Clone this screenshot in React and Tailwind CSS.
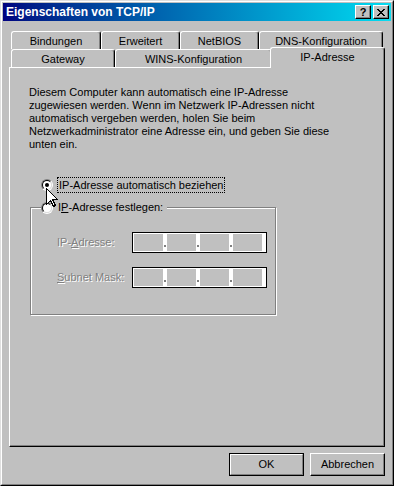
const rowOne = [
  { label: 'Bindungen', w: 'w-[90px]' },
  { label: 'Erweitert', w: 'w-[79px]' },
  { label: 'NetBIOS', w: 'w-[79px]' },
  { label: 'DNS-Konfiguration', w: 'w-[124px]' },
]

const introLines = [
  'Diesem Computer kann automatisch eine IP-Adresse',
  'zugewiesen werden. Wenn im Netzwerk IP-Adressen nicht',
  'automatisch vergeben werden, holen Sie beim',
  'Netzwerkadministrator eine Adresse ein, und geben Sie diese',
  'unten ein.',
]

function Tab({ label, w, active }) {
  if (active) {
    return (
      <div
        className={`relative z-10 -mx-[2px] -mt-[2px] h-[21px] shrink-0 rounded-t-[3px] border-l border-r border-t border-l-white border-r-black border-t-white bg-[#c0c0c0] pt-[3px] text-center shadow-[inset_-1px_0_0_#808080] ${w}`}
      >
        {label}
      </div>
    )
  }
  return (
    <div
      className={`h-[18px] shrink-0 rounded-t-[3px] border-l border-r border-t border-l-white border-r-black border-t-white pt-[3px] text-center shadow-[inset_-1px_0_0_#808080] ${w}`}
    >
      {label}
    </div>
  )
}

function Radio({ checked }) {
  return (
    <div className="h-[12px] w-[12px] shrink-0 rounded-full border border-b-white border-l-[#808080] border-r-white border-t-[#808080]">
      <div className="flex h-full w-full items-center justify-center rounded-full border border-b-[#dfdfdf] border-l-black border-r-[#dfdfdf] border-t-black bg-white">
        {checked && <div className="h-[4px] w-[4px] rounded-full bg-black" />}
      </div>
    </div>
  )
}

function IpField() {
  return (
    <div className="flex h-[21px] w-[135px] border border-black bg-white p-px">
      {[0, 1, 2, 3].map((i) => (
        <div key={i} className="flex">
          <div className="h-full w-[29px] bg-[#c0c0c0]" />
          {i < 3 && (
            <div className="flex w-[4px] flex-col justify-end pb-[4px]">
              <div className="ml-px h-[2px] w-[2px] bg-[#808080]" />
            </div>
          )}
        </div>
      ))}
    </div>
  )
}

function FieldRow({ children }) {
  return (
    <div className="flex items-center">
      <span className="w-[75px] text-[#808080] [text-shadow:1px_1px_0_#fff]">{children}</span>
      <IpField />
    </div>
  )
}

function Button({ label, primary }) {
  if (primary) {
    return (
      <div className="h-[23px] w-[75px] border border-black">
        <div className="flex h-full w-full items-center justify-center border border-b-[#808080] border-l-white border-r-[#808080] border-t-white">
          {label}
        </div>
      </div>
    )
  }
  return (
    <div className="h-[23px] w-[75px]">
      <div className="flex h-full w-full items-center justify-center border border-b-black border-l-white border-r-black border-t-white shadow-[inset_-1px_-1px_0_#808080]">
        {label}
      </div>
    </div>
  )
}

function TitleButton({ children }) {
  return (
    <div className="h-[14px] w-[16px] border border-b-black border-l-white border-r-black border-t-white bg-[#c0c0c0] shadow-[inset_-1px_-1px_0_#808080]">
      <div className="flex h-full w-full items-center justify-center">{children}</div>
    </div>
  )
}

export default function App() {
  return (
    <div className="relative h-[486px] w-[394px] border border-b-black border-l-[#dfdfdf] border-r-black border-t-[#dfdfdf] bg-[#c0c0c0] font-['Liberation_Sans',Arial,sans-serif] text-[11px] leading-[13px] text-black">
      <div className="h-full w-full border border-b-[#808080] border-l-white border-r-[#808080] border-t-white p-px">
        <div className="flex h-[18px] items-center bg-gradient-to-r from-[#000080] to-[#10dcf0] pl-[3px] pr-[2px]">
          <span className="flex-1 text-[12px] font-bold text-white">Eigenschaften von TCP/IP</span>
          <div className="flex gap-[2px]">
            <TitleButton>
              <span className="text-[11px] font-bold leading-none">?</span>
            </TitleButton>
            <TitleButton>
              <svg width="8" height="7" viewBox="0 0 8 7" shapeRendering="crispEdges">
                <path d="M0 0h2v1h-2zM6 0h2v1h-2zM1 1h2v1h-2zM5 1h2v1h-2zM2 2h4v1h-4zM3 3h2v1h-2zM2 4h4v1h-4zM1 5h2v1h-2zM5 5h2v1h-2zM0 6h2v1h-2zM6 6h2v1h-2z" fill="#000" />
              </svg>
            </TitleButton>
          </div>
        </div>

        <div className="px-[6px]">
          <div className="mt-[10px] pl-[2px]">
            <div className="flex">
              {rowOne.map((t) => (
                <Tab key={t.label} label={t.label} w={t.w} />
              ))}
            </div>
            <div className="flex h-[18px] items-start">
              <Tab label="Gateway" w="w-[104px]" />
              <Tab label="WINS-Konfiguration" w="w-[157px]" />
              <Tab label="IP-Adresse" w="w-[115px]" active />
            </div>
          </div>

          <div className="h-[380px] border border-b-black border-l-white border-r-black border-t-white pl-[19px] pt-[18px] shadow-[inset_-1px_-1px_0_#808080]">
            <p>
              {introLines.map((line) => (
                <span key={line} className="block">
                  {line}
                </span>
              ))}
            </p>

            <div className="ml-[12px] mt-[26px] flex h-[16px] items-center gap-[4px]">
              <Radio checked />
              <span className="flex h-[16px] items-center border border-dotted border-black px-px">
                IP-Adresse automatisch beziehen
              </span>
            </div>

            <div className="ml-px mt-[14px] h-[108px] w-[246px] border border-[#808080] shadow-[inset_1px_1px_0_#fff,1px_1px_0_#fff]">
              <div className="-mt-[7px] ml-[10px] flex h-[13px] w-fit items-center gap-[5px] bg-[#c0c0c0] pr-[4px]">
                <Radio />
                <span>
                  I<span className="underline">P</span>-Adresse festlegen:
                </span>
              </div>
              <div className="mt-[18px] flex flex-col gap-[14px] pl-[26px]">
                <FieldRow>
                  IP-<span className="underline">A</span>dresse:
                </FieldRow>
                <FieldRow>
                  <span className="underline">S</span>ubnet Mask:
                </FieldRow>
              </div>
            </div>
          </div>

          <div className="mt-[6px] flex justify-end gap-[6px]">
            <Button label="OK" primary />
            <Button label="Abbrechen" />
          </div>
        </div>
      </div>

      {/* mouse pointer resting over the first radio */}
      <svg
        className="absolute left-[45px] top-[187px]"
        width="12"
        height="19"
        viewBox="0 0 12 19"
        shapeRendering="crispEdges"
      >
        <path d="M0.5 0.5V16.5L4.5 12.5L7.5 18.5L9.5 17.5L6.5 11.5H11.5Z" fill="#fff" stroke="#000" strokeWidth="1" />
      </svg>
    </div>
  )
}
